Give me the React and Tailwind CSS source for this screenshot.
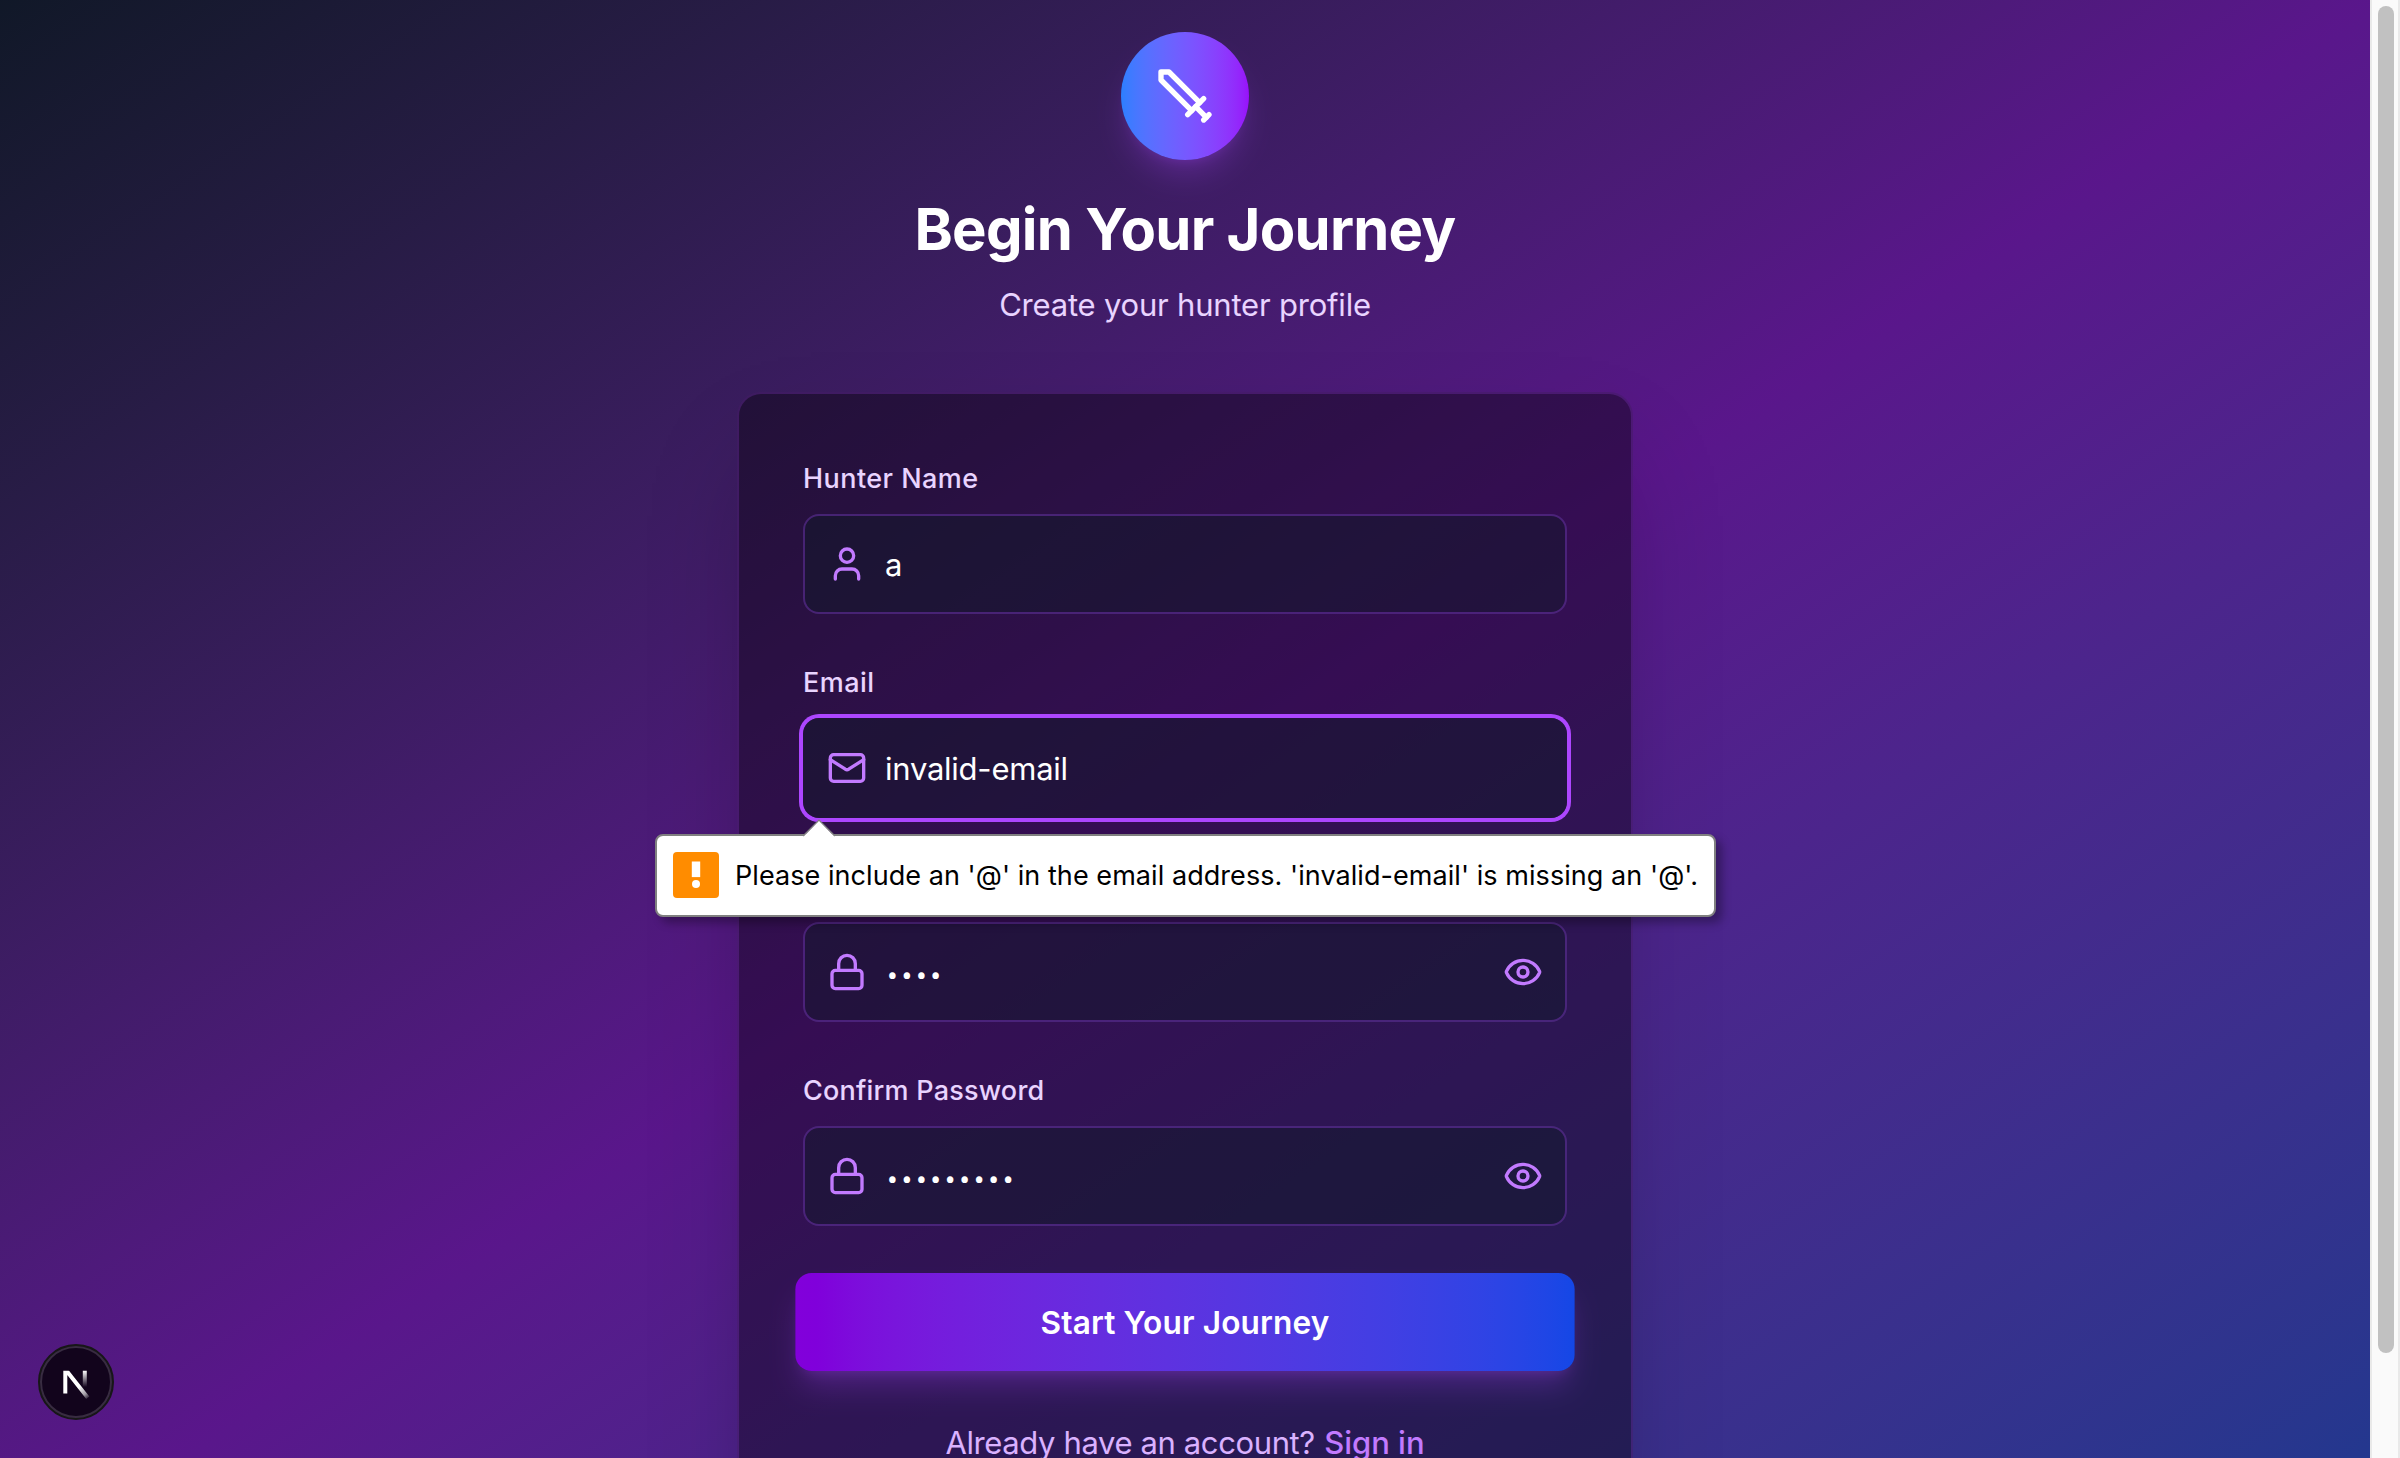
import { Eye, Lock } from "lucide-react";

function SwordIcon() {
  return (
    <svg className="size-16 text-white" viewBox="0 0 24 24" fill="none" stroke="currentColor" strokeWidth="2" strokeLinecap="round" strokeLinejoin="round">
      <polyline points="14.5 17.5 3 6 3 3 6 3 17.5 14.5" />
      <line x1="13" x2="19" y1="19" y2="13" />
      <line x1="16" x2="20" y1="16" y2="20" />
      <line x1="19" x2="21" y1="21" y2="19" />
    </svg>
  );
}

function UserIcon({ className }) {
  return (
    <svg className={className} viewBox="0 0 24 24" fill="none" stroke="currentColor" strokeWidth="2" strokeLinecap="round" strokeLinejoin="round">
      <path d="M19 21v-2a4 4 0 0 0-4-4H9a4 4 0 0 0-4 4v2" />
      <circle cx="12" cy="7" r="4" />
    </svg>
  );
}

function MailIcon({ className }) {
  return (
    <svg className={className} viewBox="0 0 24 24" fill="none" stroke="currentColor" strokeWidth="2" strokeLinecap="round" strokeLinejoin="round">
      <path d="m22 7-8.991 5.727a2 2 0 0 1-2.009 0L2 7" />
      <rect x="2" y="4" width="20" height="16" rx="2" />
    </svg>
  );
}

function Field({ label, labelTracking = "tracking-[0.45px]", icon: Icon, value, secret, focused, children }) {
  return (
    <div>
      <label className={`mb-[15px] block h-[41px] pt-px text-[27px] leading-10 font-medium text-purple-200 ${labelTracking}`}>{label}</label>
      <div
        className={
          focused
            ? "relative flex h-[100px] items-center rounded-2xl bg-gray-900/50 px-6 ring-4 ring-purple-500"
            : "relative flex h-[100px] items-center rounded-2xl border-2 border-purple-500/30 bg-gray-900/50 px-[22px]"
        }
      >
        <Icon className="size-10 shrink-0 text-purple-400" />
        {secret ? (
          <span className="ml-5 flex-1 pt-[7px] font-[Roboto,sans-serif] text-[32px] leading-[48px] tracking-[3.66px] text-white">{value}</span>
        ) : (
          <span className="ml-[18px] flex-1 pt-0.5 text-[31px] leading-[48px] tracking-[-0.24px] text-white">{value}</span>
        )}
        {secret && <Eye className="size-10 shrink-0 text-purple-400" />}
        {children}
      </div>
    </div>
  );
}

function ValidationBubble() {
  return (
    <div className="absolute top-[116px] left-[-148px] z-10 flex h-[83px] w-[1061px] items-center rounded-lg border-2 border-[#808080] bg-white pl-4 shadow-[6px_6px_10px_rgba(0,0,0,0.3)]">
      <svg className="absolute top-[-17px] left-[145px] h-[18px] w-9" viewBox="0 0 36 18">
        <path d="M1 18 L17 1.5 L33 18 Z" fill="#fff" />
        <path d="M1 17 L17 1 L33 17" fill="none" stroke="#808080" strokeWidth="1.2" />
      </svg>
      <svg className="mb-px h-[46px] w-[46px] shrink-0" viewBox="0 0 46 46">
        <rect width="46" height="46" rx="4" fill="#ff8c00" />
        <rect x="18.8" y="9.5" width="8.4" height="15.6" fill="#fff" />
        <circle cx="23" cy="32" r="4" fill="#fff" />
      </svg>
      <span className="ml-4 pt-px text-[27px] whitespace-nowrap tracking-[0.06px] text-black">
        Please include an '@' in the email address. 'invalid-email' is missing an '@'.
      </span>
    </div>
  );
}

function DevBadge() {
  return (
    <div className="absolute bottom-[38px] left-[38px] flex size-[76px] items-center justify-center rounded-full border-2 border-[#171717] bg-[#12041c]">
      <div className="flex size-[72px] shrink-0 items-center justify-center rounded-full border-2 border-[#382c41]">
        <svg className="size-[72px] shrink-0" viewBox="0 0 72 72">
          <defs>
            <linearGradient id="diagonal" gradientUnits="userSpaceOnUse" x1="39" y1="41" x2="49" y2="53">
              <stop stopColor="#fff" />
              <stop offset="0.6" stopColor="#fff" stopOpacity="0.6" />
              <stop offset="1" stopColor="#fff" stopOpacity="0" />
            </linearGradient>
            <linearGradient id="stem" gradientUnits="userSpaceOnUse" x1="0" y1="24.7" x2="0" y2="41">
              <stop stopColor="#fff" />
              <stop offset="1" stopColor="#fff" stopOpacity="0" />
            </linearGradient>
            <clipPath id="mark">
              <rect x="20" y="24.8" width="40" height="40" />
            </clipPath>
          </defs>
          <g clipPath="url(#mark)" fill="none" strokeWidth="4">
            <path d="M47.8 51.8 L25.3 23.2 V47.4" stroke="url(#diagonal)" />
            <path d="M44.8 24 V48" stroke="url(#stem)" />
          </g>
        </svg>
      </div>
    </div>
  );
}

export default function App() {
  return (
    <div className="relative flex h-[1458px] w-[2400px] overflow-hidden font-[Inter,sans-serif]">
      <main className="flex h-[1565px] w-[2370px] shrink-0 justify-center bg-linear-to-br from-gray-900 via-purple-900 to-blue-900 p-8">
        <div className="w-[896px]">
          <header className="mb-16 flex flex-col items-center">
            <div className="mb-[33px] flex size-32 items-center justify-center rounded-full bg-linear-to-r from-blue-500 to-purple-600 shadow-[0_20px_30px_-6px,0_8px_12px_-8px] shadow-purple-500/25">
              <SwordIcon />
            </div>
            <h1 className="mb-4 text-[58px] leading-[72px] font-bold tracking-[-0.74px] text-white">Begin Your Journey</h1>
            <p className="-mb-px text-[31px] leading-[48px] tracking-[-0.2px] text-purple-200">Create your hunter profile</p>
          </header>

          <section className="rounded-3xl border-2 border-purple-500/20 bg-black/40 p-16 shadow-[0_50px_100px_-24px_rgba(0,0,0,0.25)]">
            <form className="flex flex-col gap-12">
              <Field label="Hunter Name" icon={UserIcon} value="a" />
              <Field label="Email" icon={MailIcon} value="invalid-email" focused>
                <ValidationBubble />
              </Field>
              <Field label="Password" icon={Lock} value="••••" secret />
              <Field label="Confirm Password" labelTracking="tracking-[0.22px]" icon={Lock} value="•••••••••" secret />
              <button
                type="button"
                className="h-24 w-full scale-[1.02] rounded-2xl bg-linear-to-r from-purple-700 to-blue-700 pt-0.5 text-[31px] leading-[48px] font-semibold tracking-[0.12px] text-white shadow-[0_20px_30px_-6px,0_8px_12px_-8px] shadow-purple-500/25"
              >
                Start Your Journey
              </button>
            </form>
            <p className="mt-[49px] text-center text-[31px] leading-[48px] tracking-[-0.38px] text-purple-300">
              Already have an account? <span className="ml-px font-medium tracking-normal text-purple-400">Sign in</span>
            </p>
          </section>
        </div>
      </main>

      <aside className="flex w-[30px] shrink-0 justify-center border-x-2 border-[#e9e9e9] bg-[#fafafa] pt-1.5">
        <div className="ml-0.5 h-[1347px] w-4 rounded-full bg-[#c1c1c1]" />
      </aside>

      <DevBadge />
    </div>
  );
}
